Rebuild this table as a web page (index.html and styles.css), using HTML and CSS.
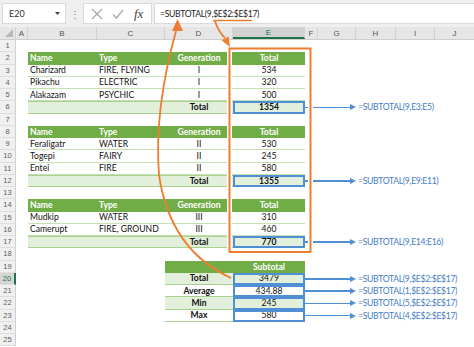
FILE: index.html
```html
<!DOCTYPE html>
<html>
<head>
<meta charset="utf-8">
<link rel="stylesheet" href="styles.css">
</head>
<body>
<div class="app">
  <div class="fbar">
    <div class="namebox"><span>E20</span><svg class="caret" width="5" height="3" viewBox="0 0 5 3"><path d="M0 0H5L2.5 3Z" fill="#444"/></svg></div>
    <div class="dots">⋮</div>
    <div class="fbtns">
      <svg width="12" height="12" viewBox="0 0 12 12"><path d="M1 1L11 11M11 1L1 11" stroke="#a6a6a6" stroke-width="1.2" fill="none"/></svg>
      <svg width="12" height="12" viewBox="0 0 12 12"><path d="M1 6.5L4.5 10L11 2" stroke="#a6a6a6" stroke-width="1.2" fill="none"/></svg>
      <span class="fx">fx</span>
    </div>
    <div class="formula">=SUBTOTAL(9,$E$2:$E$17)</div>
  </div>
  <div class="colhdr">
    <div class="ch corner"><svg width="8" height="8" viewBox="0 0 8 8"><path d="M8 0V8H0Z" fill="#b8b8b8"/></svg></div>
    <div class="ch">A</div>
    <div class="ch">B</div>
    <div class="ch">C</div>
    <div class="ch">D</div>
    <div class="ch sel">E</div>
    <div class="ch">F</div>
    <div class="ch">G</div>
    <div class="ch">H</div>
    <div class="ch">I</div>
    <div class="ch last">J</div>
  </div>
  <div class="sheet">
    <div class="row"><div class="rh">1</div></div>
    <div class="row"><div class="rh">2</div><div></div><div class="c hd">Name</div><div class="c hd">Type</div><div class="c hd ctr">Generation</div><div class="c hd ctr">Total</div></div>
    <div class="row"><div class="rh">3</div><div></div><div class="c dt">Charizard</div><div class="c dt">FIRE, FLYING</div><div class="c dt ctr">I</div><div class="c dt ctr">534</div></div>
    <div class="row"><div class="rh">4</div><div></div><div class="c dt">Pikachu</div><div class="c dt">ELECTRIC</div><div class="c dt ctr">I</div><div class="c dt ctr">320</div></div>
    <div class="row"><div class="rh">5</div><div></div><div class="c dt">Alakazam</div><div class="c dt">PSYCHIC</div><div class="c dt ctr">I</div><div class="c dt ctr">500</div></div>
    <div class="row"><div class="rh">6</div><div></div><div class="c tot"></div><div class="c tot"></div><div class="c tot ctr">Total</div><div class="c tot ctr box">1354</div><div class="note"><span class="ln"></span><span class="ah"></span><span class="tx">=SUBTOTAL(9,E3:E5)</span></div></div>
    <div class="row"><div class="rh">7</div></div>
    <div class="row"><div class="rh">8</div><div></div><div class="c hd">Name</div><div class="c hd">Type</div><div class="c hd ctr">Generation</div><div class="c hd ctr">Total</div></div>
    <div class="row"><div class="rh">9</div><div></div><div class="c dt">Feraligatr</div><div class="c dt">WATER</div><div class="c dt ctr">II</div><div class="c dt ctr">530</div></div>
    <div class="row"><div class="rh">10</div><div></div><div class="c dt">Togepi</div><div class="c dt">FAIRY</div><div class="c dt ctr">II</div><div class="c dt ctr">245</div></div>
    <div class="row"><div class="rh">11</div><div></div><div class="c dt">Entei</div><div class="c dt">FIRE</div><div class="c dt ctr">II</div><div class="c dt ctr">580</div></div>
    <div class="row"><div class="rh">12</div><div></div><div class="c tot"></div><div class="c tot"></div><div class="c tot ctr">Total</div><div class="c tot ctr box">1355</div><div class="note"><span class="ln"></span><span class="ah"></span><span class="tx">=SUBTOTAL(9,E9:E11)</span></div></div>
    <div class="row"><div class="rh">13</div></div>
    <div class="row"><div class="rh">14</div><div></div><div class="c hd">Name</div><div class="c hd">Type</div><div class="c hd ctr">Generation</div><div class="c hd ctr">Total</div></div>
    <div class="row"><div class="rh">15</div><div></div><div class="c dt">Mudkip</div><div class="c dt">WATER</div><div class="c dt ctr">III</div><div class="c dt ctr">310</div></div>
    <div class="row"><div class="rh">16</div><div></div><div class="c dt">Camerupt</div><div class="c dt">FIRE, GROUND</div><div class="c dt ctr">III</div><div class="c dt ctr">460</div></div>
    <div class="row"><div class="rh">17</div><div></div><div class="c tot"></div><div class="c tot"></div><div class="c tot ctr">Total</div><div class="c tot ctr box">770</div><div class="note"><span class="ln"></span><span class="ah"></span><span class="tx">=SUBTOTAL(9,E14:E16)</span></div></div>
    <div class="row"><div class="rh">18</div></div>
    <div class="row"><div class="rh">19</div><div></div><div></div><div></div><div class="c hd"></div><div class="c hd ctr">Subtotal</div></div>
    <div class="row"><div class="rh cur">20</div><div></div><div></div><div></div><div class="c st fill ctr b">Total</div><div class="c st fill ctr box">3479</div><div class="note"><span class="ln"></span><span class="ah"></span><span class="tx">=SUBTOTAL(9,$E$2:$E$17)</span></div></div>
    <div class="row"><div class="rh">21</div><div></div><div></div><div></div><div class="c st ctr b">Average</div><div class="c st ctr box">434.88</div><div class="note"><span class="ln"></span><span class="ah"></span><span class="tx">=SUBTOTAL(1,$E$2:$E$17)</span></div></div>
    <div class="row"><div class="rh">22</div><div></div><div></div><div></div><div class="c st fill ctr b">Min</div><div class="c st fill ctr box">245</div><div class="note"><span class="ln"></span><span class="ah"></span><span class="tx">=SUBTOTAL(5,$E$2:$E$17)</span></div></div>
    <div class="row"><div class="rh">23</div><div></div><div></div><div></div><div class="c st ctr b">Max</div><div class="c st ctr box">580</div><div class="note"><span class="ln"></span><span class="ah"></span><span class="tx">=SUBTOTAL(4,$E$2:$E$17)</span></div></div>
    <div class="row"><div class="rh">24</div></div>
    <div class="row"><div class="rh">25</div></div>
  </div>
  <svg class="overlay" width="474" height="347" viewBox="0 0 474 347">
    <rect x="229.5" y="48.5" width="81" height="203.5" fill="none" stroke="#fff" stroke-width="5"/>
    <rect x="229.5" y="48.5" width="81" height="203.5" fill="none" stroke="#ed7d31" stroke-width="2"/>
    <path d="M231 278 Q170 250 159 175 Q154 110 176 31" fill="none" stroke="#ed7d31" stroke-width="1.8"/>
    <path d="M177.5 19 L183 31 L172 31 Z" fill="#ed7d31"/>
    <path d="M213 20.5 L252 20.5" stroke="#ed7d31" stroke-width="1.5"/>
    <path d="M215 21 Q218 31 225 38" fill="none" stroke="#ed7d31" stroke-width="1.8"/>
    <path d="M230 47 L221.6 40.2 L228.6 36.4 Z" fill="#ed7d31"/>
  </svg>
</div>
</body>
</html>
```
FILE: styles.css
```css
* { box-sizing: border-box; }
html, body { margin: 0; padding: 0; }
body {
  width: 474px;
  height: 347px;
  overflow: hidden;
  background: #fff;
  font-family: Lato, "Liberation Sans", sans-serif;
}
.app { position: relative; width: 474px; height: 347px; }

.fbar {
  height: 27px;
  background: #efefef;
  display: flex;
  align-items: flex-start;
  padding-top: 3px;
  padding-left: 2px;
}
.namebox {
  width: 64px;
  height: 21px;
  background: #fff;
  border: 1px solid #dadada;
  display: flex;
  align-items: center;
  justify-content: space-between;
  padding: 0 5px 0 6px;
  font-size: 9px;
  color: #333;
}
.dots {
  width: 17px;
  height: 21px;
  display: flex;
  align-items: center;
  justify-content: center;
  color: #8a8a8a;
  font-size: 10px;
}
.fbtns {
  width: 69px;
  height: 21px;
  background: #fff;
  border: 1px solid #dadada;
  display: flex;
  align-items: center;
  gap: 9px;
  padding-left: 7px;
}
.fx {
  font-family: "Liberation Serif", serif;
  font-style: italic;
  font-size: 13px;
  color: #444;
  margin-left: 1px;
}
.formula {
  flex: 1;
  height: 21px;
  margin-left: 2px;
  background: #fff;
  border: 1px solid #dadada;
  border-right: none;
  display: flex;
  align-items: center;
  padding-left: 5px;
  font-size: 8.6px;
  letter-spacing: -0.3px;
  color: #222;
}

.colhdr {
  height: 13px;
  display: grid;
  grid-template-columns: 16px 12px 69px 68px 68px 72px 13px 38px 40px 39px 1fr;
  background: #e6e6e6;
  border-bottom: 1px solid #cfcfcf;
}
.ch {
  display: flex;
  align-items: center;
  justify-content: center;
  font-family: "Liberation Sans", sans-serif;
  font-size: 8px;
  color: #555;
  border-right: 1px solid #d2d2d2;
}
.ch.last { border-right: none; }
.ch.corner { align-items: flex-end; justify-content: flex-end; padding: 0 2px 2px 0; }
.ch.sel {
  background: #d2d2d2;
  border-bottom: 2px solid #217346;
  color: #217346;
  padding-top: 1px;
}

.row {
  display: grid;
  grid-template-columns: 16px 12px 69px 68px 68px 72px 1fr;
  height: 12.25px;
}
.rh {
  background: #f0f0f0;
  border-right: 1px solid #d0d0d0;
  border-bottom: 1px solid #dedede;
  display: flex;
  align-items: center;
  justify-content: center;
  font-family: "Liberation Sans", sans-serif;
  font-size: 7.5px;
  color: #5f5f5f;
}
.rh.cur {
  background: #d6d6d6;
  color: #217346;
  border-right: 2px solid #217346;
}
.c {
  display: flex;
  align-items: center;
  padding: 0 2px;
  white-space: nowrap;
  font-size: 8.6px;
  color: #111;
}
.ctr { justify-content: center; }
.hd { background: #70ad47; color: #fff; font-weight: 700; }
.dt { border-bottom: 1px solid #c6e0b4; }
.tot {
  background: #e2efda;
  border-top: 1px solid #a9d08e;
  border-bottom: 1px solid #a9d08e;
  font-weight: 700;
}
.st { border-bottom: 1px solid #a9d08e; }
.fill { background: #e2efda; }
.b { font-weight: 700; }
.box {
  outline: 2px solid #4f8fd3;
  outline-offset: -2px;
}
.note {
  display: flex;
  align-items: center;
}
.ln { width: 45px; height: 1.5px; background: #4f8fd3; }
.ah {
  width: 0;
  height: 0;
  border-left: 6px solid #4f8fd3;
  border-top: 3px solid transparent;
  border-bottom: 3px solid transparent;
}
.tx {
  margin-left: 2px;
  color: #3f7cc6;
  font-size: 8.6px;
  letter-spacing: -0.3px;
  white-space: nowrap;
}

.overlay {
  position: absolute;
  left: 0;
  top: 0;
  pointer-events: none;
}
```
